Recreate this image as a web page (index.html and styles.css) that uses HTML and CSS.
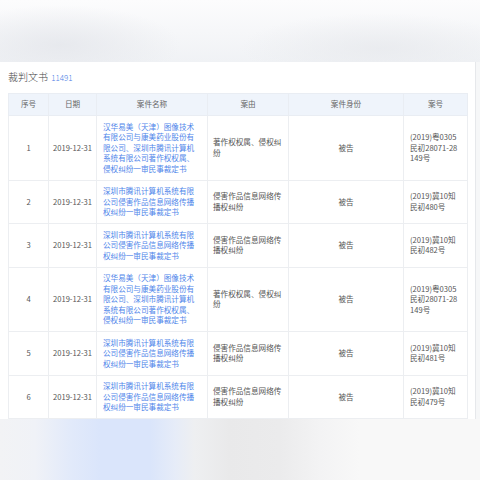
FILE: index.html
```html
<!DOCTYPE html>
<html lang="zh-CN">
<head>
<meta charset="utf-8">
<link rel="stylesheet" href="styles.css">
</head>
<body>
<div class="top-band"></div>
<div class="card">
  <div class="title">裁判文书 <span class="count">11491</span></div>
  <table class="docs">
    <colgroup>
      <col class="c-no"><col class="c-date"><col class="c-name"><col class="c-cause"><col class="c-role"><col class="c-case">
    </colgroup>
    <thead>
      <tr><th>序号</th><th>日期</th><th>案件名称</th><th>案由</th><th>案件身份</th><th>案号</th></tr>
    </thead>
    <tbody>
      <tr>
        <td class="center">1</td><td class="center">2019-12-31</td>
        <td class="link">汉华易美（天津）图像技术有限公司与康美药业股份有限公司、深圳市腾讯计算机系统有限公司著作权权属、侵权纠纷一审民事裁定书</td>
        <td class="cause">著作权权属、侵权纠纷</td><td class="center">被告</td><td class="case">(2019)粤0305民初28071-28149号</td>
      </tr>
      <tr>
        <td class="center">2</td><td class="center">2019-12-31</td>
        <td class="link">深圳市腾讯计算机系统有限公司侵害作品信息网络传播权纠纷一审民事裁定书</td>
        <td class="cause">侵害作品信息网络传播权纠纷</td><td class="center">被告</td><td class="case">(2019)冀10知民初480号</td>
      </tr>
      <tr>
        <td class="center">3</td><td class="center">2019-12-31</td>
        <td class="link">深圳市腾讯计算机系统有限公司侵害作品信息网络传播权纠纷一审民事裁定书</td>
        <td class="cause">侵害作品信息网络传播权纠纷</td><td class="center">被告</td><td class="case">(2019)冀10知民初482号</td>
      </tr>
      <tr>
        <td class="center">4</td><td class="center">2019-12-31</td>
        <td class="link">汉华易美（天津）图像技术有限公司与康美药业股份有限公司、深圳市腾讯计算机系统有限公司著作权权属、侵权纠纷一审民事裁定书</td>
        <td class="cause">著作权权属、侵权纠纷</td><td class="center">被告</td><td class="case">(2019)粤0305民初28071-28149号</td>
      </tr>
      <tr>
        <td class="center">5</td><td class="center">2019-12-31</td>
        <td class="link">深圳市腾讯计算机系统有限公司侵害作品信息网络传播权纠纷一审民事裁定书</td>
        <td class="cause">侵害作品信息网络传播权纠纷</td><td class="center">被告</td><td class="case">(2019)冀10知民初481号</td>
      </tr>
      <tr>
        <td class="center">6</td><td class="center">2019-12-31</td>
        <td class="link">深圳市腾讯计算机系统有限公司侵害作品信息网络传播权纠纷一审民事裁定书</td>
        <td class="cause">侵害作品信息网络传播权纠纷</td><td class="center">被告</td><td class="case">(2019)冀10知民初479号</td>
      </tr>
    </tbody>
  </table>
</div>
<div class="bottom-band"></div>
</body>
</html>
```

FILE: styles.css
```css
html, body {
  margin: 0;
  padding: 0;
  background: #f6f7f8;
  font-family: "Noto Sans CJK SC", "Noto Sans", sans-serif;
  width: 480px;
  height: 480px;
  overflow: hidden;
}

.top-band {
  height: 62px;
  background:
    radial-gradient(ellipse 120px 40px at 60px 45px, rgba(228,230,235,0.8), rgba(240,242,245,0) 100%),
    radial-gradient(ellipse 140px 35px at 380px 48px, rgba(230,232,236,0.7), rgba(240,242,245,0) 100%),
    linear-gradient(#fcfcfd, #f0f2f5);
}

.card {
  width: 467px;
  padding: 0 0 0 8px;
  background: #fff;
  border-right: 1px solid #e6e8eb;
  box-sizing: content-box;
}

.title {
  padding-top: 9px;
  height: 22px;
  box-sizing: content-box;
  font-size: 10px;
  line-height: 12px;
  color: #444;
  font-weight: 300;
}

.count {
  font-size: 8px;
  color: #4d7fe6;
  margin-left: 1px;
}

.docs {
  width: 459px;
  border-collapse: collapse;
  table-layout: fixed;
  font-size: 7.6px;
  line-height: 10.5px;
  color: #555;
}

.c-no { width: 40px; }
.c-date { width: 48px; }
.c-name { width: 111px; }
.c-cause { width: 81px; }
.c-role { width: 115px; }
.c-case { width: 64px; }

.docs th {
  background: #eff4fb;
  font-weight: normal;
  color: #666;
  height: 21px;
  padding: 0;
  border: 1px solid #e9edf3;
}

.docs td {
  border: 1px solid #eceef1;
  padding: 5.5px 6px;
  vertical-align: middle;
  word-break: break-all;
}

.docs td.center { text-align: center; padding: 5.5px 2px; }
.docs td.link { color: #4f86ea; padding-right: 10px; }
.docs td.cause { padding: 5.5px 4px 5.5px 5px; }
.docs td.case { padding-right: 8px; }

.bottom-band {
  height: 63px;
  background:
    linear-gradient(90deg,
      #f2f3f5 0px, #f0f2f7 35px, #e2eafa 70px, #dae5fb 100px, #dae5fb 150px,
      #e6ecf8 175px, #eeeff1 195px, #e9e9ea 230px, #ebebec 280px,
      #f3f3f4 320px, #f8f8f8 360px, #f8f8f8 480px);
}
```
